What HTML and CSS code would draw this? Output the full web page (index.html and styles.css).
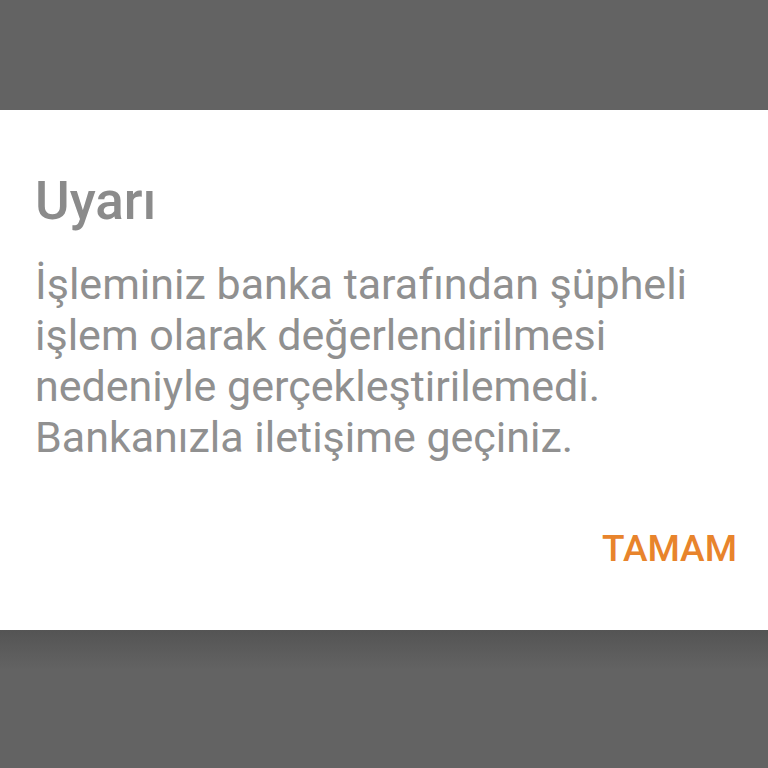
FILE: index.html
```html
<!DOCTYPE html>
<html lang="tr">
<head>
<meta charset="utf-8">
<link rel="stylesheet" href="styles.css">
</head>
<body>
<div class="screen">
  <div class="top"></div>
  <div class="dialog">
    <h1 class="title">Uyarı</h1>
    <p class="message">İşleminiz banka tarafından şüpheli işlem olarak değerlendirilmesi nedeniyle gerçekleştirilemedi. Bankanızla iletişime geçiniz.</p>
    <div class="actions"><span class="btn">TAMAM</span></div>
  </div>
  <div class="bottom"></div>
</div>
</body>
</html>
```
FILE: styles.css
```css
html, body { margin: 0; padding: 0; }
body { background: #636363; font-family: Roboto, "Noto Sans", sans-serif; }
.screen { width: 768px; height: 768px; display: flex; flex-direction: column; overflow: hidden; }
.top { height: 110px; background: #636363; flex: none; }
.dialog { background: #fff; height: 520px; flex: none; box-sizing: border-box; padding: 0 31px 0 35px; display: flex; flex-direction: column; }
.title { margin: 0; padding-top: 56px; font-size: 53px; font-weight: 500; line-height: 70px; color: #8b8b8b; }
.message { margin: 23px 0 0; font-size: 43px; line-height: 51px; color: #909090; width: 710px; }
.actions { display: flex; justify-content: flex-end; margin-top: 61px; }
.btn { font-size: 37px; font-weight: 500; color: #e8842c; line-height: 50px; }
.bottom { flex: 1; background: linear-gradient(#545454, #636363 40px); }
```
